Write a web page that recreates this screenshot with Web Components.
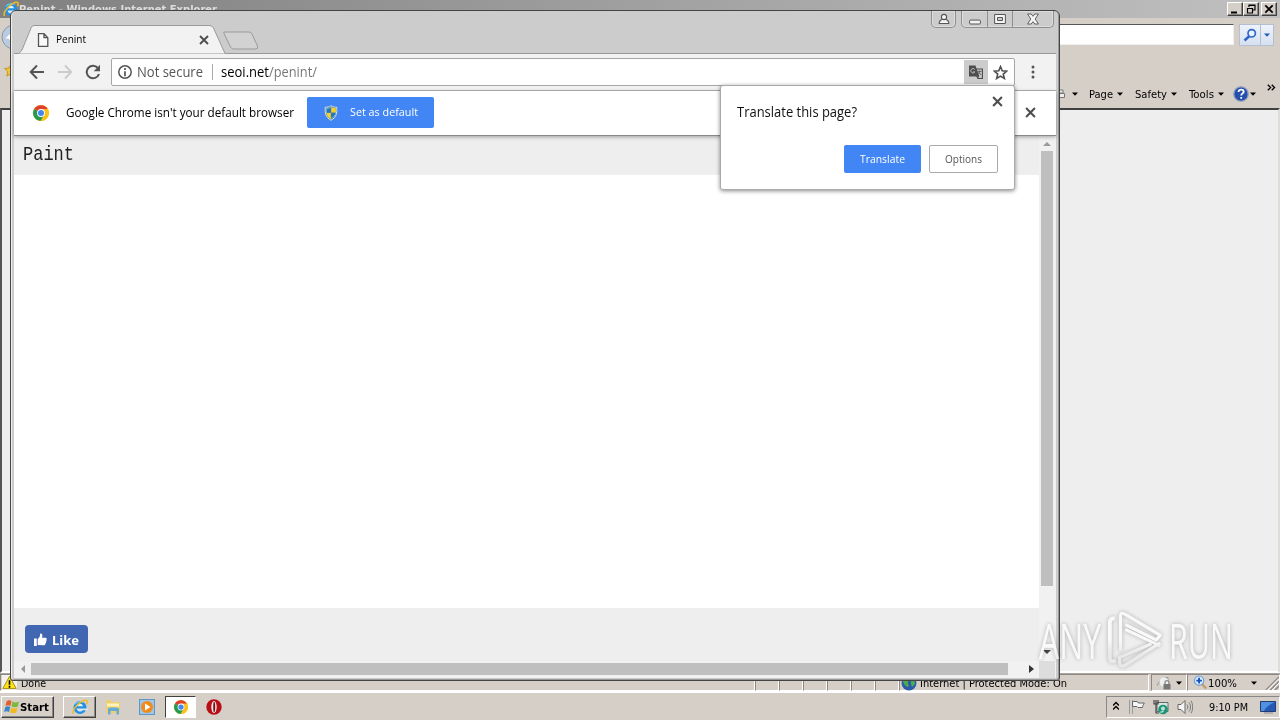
<!DOCTYPE html>
<html lang="en"><head><meta charset="utf-8"><title>Penint</title>
<style>
html,body{margin:0;width:1280px;height:720px;overflow:hidden;background:#d6cfc8}
body{font:11px "DejaVu Sans Condensed","Noto Sans",sans-serif;color:#000}
</style></head><body>
<desktop-screen></desktop-screen>
<script>
const icons={
 ie:`<svg viewBox="0 0 16 16"><circle cx="8" cy="8.500" r="6.500" fill="#2590e2"/><path d="M4.500 7.300c.5-3.300 6-3.300 6.500 0z" fill="#dff1fb"/><path d="M4.500 9.500c1 4 5 3.500 6.200 1.800h5V9.500z" fill="#d9e6ee"/><path d="M3 5.500C5 2.500 9 2 11.500 3.500" stroke="#67c4f5" stroke-width="1.300" fill="none"/><path d="M1.500 14.800C-1 11 9 1 14 1.200c2.200.5 1 3 .3 4.200" fill="none" stroke="#eebc27" stroke-width="1.500"/></svg>`,
 chrome:`<svg viewBox="0 0 16 16"><circle cx="8" cy="8" r="8" fill="#fbc116"/><path d="M8 8L1.100 4A8 8 0 0 1 14.900 4.300H8z" fill="#e03d30"/><path d="M8 8L1.100 4A8 8 0 0 0 7.600 16L11.500 9.800z" fill="#269b50"/><path d="M8 4.300H15A8 8 0 0 1 7.600 16L11.300 10z" fill="#fbc116"/><circle cx="8" cy="8" r="3.900" fill="#fff"/><circle cx="8" cy="8" r="3" fill="#4387ee"/></svg>`,
 page:`<svg viewBox="0 0 12 14"><path d="M1.500.7h5.500l3.800 4v8.600H1.500zM7 .7v4h3.800" fill="#fafafa" stroke="#555" stroke-width="1.300"/></svg>`,
 x:`<svg viewBox="0 0 10 10"><path d="M1 1l8 8M9 1L1 9" stroke="#4e4e4e" stroke-width="1.900"/></svg>`,
 back:`<svg viewBox="0 0 16 16"><path d="M15 8H2M8 1.500L1.700 8 8 14.500" fill="none" stroke="#555" stroke-width="2"/></svg>`,
 fwd:`<svg viewBox="0 0 16 16"><path d="M1 8h13M8 1.500L14.300 8 8 14.500" fill="none" stroke="#ccc" stroke-width="2"/></svg>`,
 reload:`<svg viewBox="0 0 16 16"><path d="M13.200 4.400A6.300 6.300 0 1 0 14 10" fill="none" stroke="#555" stroke-width="2"/><path d="M15 .8v6.400H8.700z" fill="#555"/></svg>`,
 info:`<svg viewBox="0 0 14 14"><circle cx="7" cy="7" r="6.200" fill="none" stroke="#555" stroke-width="1.500"/><path d="M7 3v2M7 6.200v5" stroke="#555" stroke-width="1.700"/></svg>`,
 translate:`<svg viewBox="0 0 16 15"><path d="M1 1h6.500l1 3H15v10.500H9.500L8.300 12H1z" fill="#4d4d4d"/><path d="M8.900 5h5v8.500h-3.700l1-2z" fill="#c4c4c4"/><path d="M6.700 4.900a2.200 2.200 0 1 0 .2 2.500H5" fill="none" stroke="#bbb"/><path d="M9.500 7h4M11.500 6v1.500L10 10M11 8l2 2.500" stroke="#666" fill="none"/></svg>`,
 star:`<svg viewBox="0 0 14 14"><path d="M7 1.500l1.600 3.900 4.200.3-3.200 2.800 1 4.100L7 10.400l-3.600 2.200 1-4.100L1.200 5.700l4.200-.3z" fill="none" stroke="#505050" stroke-width="1.500"/></svg>`,
 dots:`<svg viewBox="0 0 4 14"><g fill="#555"><circle cx="2" cy="2" r="1.500"/><circle cx="2" cy="7" r="1.500"/><circle cx="2" cy="12" r="1.500"/></g></svg>`,
 shield:`<svg viewBox="0 0 14 16"><path d="M7 .8c2 1.200 3.700 1.500 5.800 1.500 0 6 .2 9.500-5.800 13C1 11.800 1.200 8.300 1.200 2.300 3.300 2.300 5 2 7 .8z" fill="#2872b8" stroke="#e9e6d1"/><path d="M6.800 2v5.800H2.200c-.2-1.500-.1-3-.1-4.600C4 3.100 5.300 2.800 6.800 2zM7.200 7.800h4.700c-.3 3-1.800 4.900-4.700 6.500z" fill="#65b5e0"/><path d="M7.200 2c1.500.8 3 1.100 4.700 1.200v4.600H7.200zM2.200 7.800h4.600v6.500C4 12.700 2.500 10.800 2.200 7.800z" fill="#f5d12c"/><path d="M6.800 3v4.800H3V4.300zM7.200 7.800h4c-.3 2.500-1.600 4-4 5.300z" fill="#2872b8"/></svg>`,
 thumb:`<svg viewBox="0 0 14 14"><path d="M0 6h3v8H0zM4 13V6.500C6 5 6.600 3.500 6.600.8c2.200-.8 3 1.500 2 4.300h4c1.500.5 1.300 1.800.6 2.300.6.700.4 1.700-.3 2 .3.800 0 1.500-.6 1.800.2 1.200-.5 2-1.700 2z" fill="#fff"/></svg>`,
 user:`<svg viewBox="0 0 12 12"><path d="M4.300 6.500C2 7 1.200 8 1.200 10.500h9.600C10.800 8 10 7 7.700 6.500z" fill="#f4f4f4" stroke="#555" stroke-width="1.100"/><circle cx="6" cy="4" r="2.600" fill="#f4f4f4" stroke="#555" stroke-width="1.100"/></svg>`,
 min:`<svg viewBox="0 0 12 12"><rect x=".6" y="7.100" width="10.800" height="3.900" rx="1" fill="#f4f4f4" stroke="#555"/></svg>`,
 max:`<svg viewBox="0 0 12 12"><path d="M.6 1.500h10.800v9H.6zM3.500 4.500h5v3h-5z" fill="#f4f4f4" fill-rule="evenodd" stroke="#555"/></svg>`,
 winx:`<svg viewBox="0 0 12 12"><path d="M.6 1h3.600L6 3.300 7.800 1h3.600L8.200 6l3.200 5H7.800L6 8.700 4.200 11H.6l3.200-5z" fill="#f4f4f4" stroke="#555" stroke-width=".9"/></svg>`,
 cmin:`<svg viewBox="0 0 10 10"><path d="M1 8.500h6" stroke="#000" stroke-width="2"/></svg>`,
 cmax:`<svg viewBox="0 0 10 10"><path d="M3 3V1h6v5H7M3 1.500h6M1 4.500h6M1.500 4v5h5V4" fill="none" stroke="#000" stroke-width="1.200"/></svg>`,
 cx:`<svg viewBox="0 0 10 10"><path d="M1.300 1.300l7.400 7.400M8.700 1.300L1.300 8.700" stroke="#000" stroke-width="1.800"/></svg>`,
 search:`<svg viewBox="0 0 14 14"><path d="M6.500 8L1.500 12.500" stroke="#2b62c4" stroke-width="2.400"/><circle cx="8.700" cy="5.300" r="3.700" fill="#e6f2ff" stroke="#3166cc" stroke-width="1.700"/></svg>`,
 help:`<svg viewBox="0 0 16 16"><circle cx="8" cy="8" r="7.200" fill="#244fae" stroke="#8c9cbb" stroke-width="1.300"/><path d="M5.500 6c0-3.200 5.200-3 5.200-.2C10.700 7.500 8.200 7.300 8.200 9.500M8.200 11v1.800" fill="none" stroke="#fff" stroke-width="1.800"/></svg>`,
 flag:`<svg viewBox="0 0 16 16"><path d="M2 1v14" stroke="#666" stroke-width="3"/><path d="M2 1v14" stroke="#fff" stroke-width="1.400"/><path d="M3.500 2.500h4.800l1 1.500h6c-1 1.800-1.800 3-1.800 4.500H9L8 7.500H3.500z" fill="#f5f5f5" stroke="#666"/></svg>`,
 net:`<svg viewBox="0 0 16 16"><path d="M4 3.500h11v9H4z" fill="#dbe7e2" stroke="#5c6c6a"/><circle cx="10" cy="10.500" r="4.800" fill="#209378"/><circle cx="10" cy="9.500" r="2" fill="#b5e5d8"/><path d="M7.500 13.500l3-1.500" stroke="#a4e4cd" stroke-width="1.500" fill="none"/><path d="M1 1v4h4V1M3 1v13h3" stroke="#444" stroke-width="1.200" fill="none"/></svg>`,
 sound:`<svg viewBox="0 0 16 16"><path d="M1 5.500h3l4-4v13l-4-4H1z" fill="#f5f5f5" stroke="#666"/><path d="M10 5.500c1.200 1.500 1.200 3.500 0 5M12 3.500c2 2.600 2 6.400 0 9M14 1.800c2.200 3.500 2.200 9 0 12.400" fill="none" stroke="#777"/></svg>`,
 desk:`<svg viewBox="0 0 16 16"><path d="M.5 2.500h15v10H.5z" fill="#2459b5" stroke="#233c70"/><path d="M1 3h14C10 5 6 8 4 12H1z" fill="#4f90e0"/><path d="M4 14h9" stroke="#889"/></svg>`,
 folder:`<svg viewBox="0 0 16 16"><path d="M1 1h5l1 2h8v11H1z" fill="#edcf71"/><path d="M2 4.500h12v3H2z" fill="#fff3bc"/><path d="M3 15.500V9.500c0-1.500 11-1.500 11 0v6h-2.500V12h-6v3.500z" fill="#64acd7"/></svg>`,
 media:`<svg viewBox="0 0 16 16"><rect x=".5" y=".5" width="15" height="15" fill="#9fc7e5" stroke="#5c98c9"/><circle cx="8" cy="8" r="6" fill="#f28a1b"/><path d="M6 4.500v7L11.500 8z" fill="#fff"/></svg>`,
 opera:`<svg viewBox="0 0 16 16"><circle cx="8" cy="8" r="7.700" fill="#b70f15"/><ellipse cx="8" cy="8" rx="2.700" ry="6" fill="#eee"/><ellipse cx="8.200" cy="8" rx="1" ry="5.300" fill="#850c12"/></svg>`,
 start:`<svg viewBox="0 0 16 16"><path d="M2.500 2.500C4 1 6 1 7.500 2L6.500 7C5 6 3 6 1.500 7z" fill="#e25f2b"/><path d="M8.500 2.500c2 1.200 4 1.200 6.500 0l-1.200 5c-2 1-4 1-6.300 0z" fill="#7bb83c"/><path d="M1.300 8c1.700-1 3.500-.8 5 0L5 13c-1.500-1-3.500-1-5 0z" fill="#3a86cc"/><path d="M7.300 8.500c2 1.200 4 1.200 6.200 0l-1.300 5c-2 1-4 1-6.200 0z" fill="#f2b921"/></svg>`,
 warn:`<svg viewBox="0 0 16 16"><rect width="16" height="16" fill="#f4f2ef"/><path d="M8 1.500L15.200 14.500H.8z" fill="#ffe216" stroke="#9c8a10"/><path d="M8 5.500v5M8 11.500v2" stroke="#000" stroke-width="1.700"/></svg>`,
 globe:`<svg viewBox="0 0 16 16"><circle cx="8" cy="8" r="7.500" fill="#2c5ca9"/><path d="M4 2c4 0 4 3 3 5s2 3 0 5c-2 0-5-4-5-6zM10 4c3 0 4 3 4 5l-3 3-1-3z" fill="#4bae4d"/></svg>`,
 lock:`<svg viewBox="0 0 16 16"><path d="M1 10.500c2-5 6-8 11-8v5" fill="#c4c4c4" stroke="#999"/><circle cx="8" cy="7" r="4.500" fill="#eee"/><path d="M9 9.500V7.700a2 2 0 0 1 4 0v1.800" fill="none" stroke="#888" stroke-width="1.300"/><rect x="7.500" y="9" width="7" height="5.500" fill="#777"/></svg>`,
 zoom:`<svg viewBox="0 0 16 16"><path d="M9.500 9.500l4.500 5" stroke="#c99a62" stroke-width="2.400"/><circle cx="6.500" cy="6" r="5" fill="#dceeff" stroke="#6d9dd6" stroke-width="1.200"/><path d="M6.500 3v6M3.500 6h6" stroke="#1a4fb5" stroke-width="2"/></svg>`,
 nav:`<svg viewBox="0 0 26 26"><circle cx="13" cy="13" r="12" fill="#b9cbdf" stroke="#8d98a6"/><path d="M19 13H8l5-5M8 13l5 5" fill="none" stroke="#fff" stroke-width="3"/></svg>`,
 fav:`<svg viewBox="0 0 14 14"><path d="M7 1l2 4 4.500.5-3.300 3 1 4.500L7 10.800 2.800 13l1-4.500L.5 5.500 5 5z" fill="#f4c63a" stroke="#c49521"/></svg>`,
 printer:`<svg viewBox="0 0 10 10"><path d="M2 1h6v3H2zM.5 4.500h9v4h-9z" fill="#eee" stroke="#777"/></svg>`,
 chev:`<svg viewBox="0 0 8 8"><path d="M.7 1.500L3.200 4 .7 6.500M4.200 1.500L6.700 4 4.200 6.500" fill="none" stroke="#000" stroke-width="1.200"/></svg>`,
 dn:`<svg viewBox="0 0 6 4"><path d="M0 .5h6L3 3.700z" fill="currentColor"/></svg>`,
 sz:`<svg viewBox="0 0 14 14"><path d="M1 14L14 1M5.500 14L14 5.500M10 14l4-4" stroke="#8c8780" stroke-width="1.500"/><path d="M2.500 14L14 2.500M7 14l7-7" stroke="#fff"/></svg>`,
 play:`<svg viewBox="0 0 60 62"><defs><linearGradient id="g" x2="0" y2="1"><stop offset=".5" stop-color="#fff"/><stop offset=".75" stop-color="#e8e8e8"/></linearGradient></defs><g fill="none" stroke="url(#g)" stroke-linejoin="round"><path d="M9 9Q4 8 4 13V50Q5 55 10 52" stroke-width="4"/><path d="M15 42V6Q15 2 19 4L56 26 52 31 20 15M20 20L56 37M56 34L20 57Q15 60 14 54V49L47 35" stroke-width="3.200"/></g></svg>`
};
function make(name,css,html){
 customElements.define(name,class extends HTMLElement{
  constructor(){super();this.attachShadow({mode:'open'}).innerHTML=`<style>*{box-sizing:border-box}:host{box-sizing:border-box}${css}</style>${html}`}
 });
}
/* Full-screen stack: browser in the back, browser window over it, taskbar below */
make('desktop-screen',':host{display:grid;grid-template-rows:692px 28px;width:1280px;height:720px;position:relative;overflow:hidden}chrome-window{position:absolute;left:10px;top:10px}any-mark{position:absolute;left:1039px;top:608px}',
`<ie-window></ie-window><task-bar></task-bar><chrome-window></chrome-window><any-mark></any-mark>`);

make('ie-window',`:host{display:grid;grid-template-rows:18px 34px 56px 565px 19px;height:692px;background:#d6cfc8}
.title{display:flex;align-items:center;padding:0 3px;background:linear-gradient(90deg,#808080,#c0c0c0);color:#ddd;font-weight:bold}
.title fit-text{margin-left:0}.sp{flex:1}
.cb{width:16px;height:14px;display:grid;place-items:center;background:#d6cfc8;border:1px solid;border-color:#fff #404040 #404040 #fff;box-shadow:inset -1px -1px #888}.cb.l{margin-left:2px}
.nav{display:flex;padding:6px 6px 0 1px}.addr{flex:1;height:21px;margin-right:5px;background:#fff;border:1px solid #555;border-right-color:#eee;border-bottom-color:#eee}
.srch{display:flex;height:22px;border:1px solid #b5bfd0;background:linear-gradient(#eef3fb,#d5e0f1)}.srch div{display:grid;place-items:center;width:20px}.srch div+div{width:13px;border-left:1px solid #b5bfd0;color:#235bb5}
.cmd{display:flex;align-items:center;padding:28px 4px 0 4px}.cmd ui-icon{flex:none}
.body{background:#eee;border:solid;border-width:2px 2px 2px 2px;border-color:#404040 #e0ddd9 #fff #555;}
.status{display:flex;background:#d6cfc8;border-bottom:1px solid #fff;align-items:center;border-top:1px solid #aaa5a0}
.pane{height:17px;flex:none;border:1px solid;border-color:#8d8781 #fff #fff #8d8781;display:flex;align-items:center}.pane fit-text{padding-top:2px}`,
`<div class="title"><ui-icon n="ie" s="16"></ui-icon><fit-text w="198">Penint - Windows Internet Explorer</fit-text><span class="sp"></span><div class="cb"><ui-icon n="cmin" s="10"></ui-icon></div><div class="cb"><ui-icon n="cmax" s="10"></ui-icon></div><div class="cb l"><ui-icon n="cx" s="10"></ui-icon></div></div>
<div class="nav"><ui-icon n="nav" s="26"></ui-icon><div class="addr"></div><div class="srch"><div><ui-icon n="search" s="14"></ui-icon></div><div><ui-icon n="dn" s="6"></ui-icon></div></div></div>
<div class="cmd"><ui-icon n="fav" s="14" style="margin-top:-48px"></ui-icon><span class="sp"></span><ui-icon n="printer" s="10"></ui-icon><ui-icon n="dn" s="6" style="margin:0 11px 0 7px"></ui-icon><fit-text w="24">Page</fit-text><ui-icon n="dn" s="6" style="margin:0 12px 0 4px"></ui-icon><fit-text w="32">Safety</fit-text><ui-icon n="dn" s="6" style="margin:0 12px 0 4px"></ui-icon><fit-text w="25">Tools</fit-text><ui-icon n="dn" s="6" style="margin:0 9px 0 4px"></ui-icon><ui-icon n="help" s="16"></ui-icon><ui-icon n="dn" s="6" style="margin:0 11px 0 1px"></ui-icon><ui-icon n="chev" s="9" style="margin-top:-13px"></ui-icon></div>
<div class="body"></div>
<div class="status"><div class="pane" style="width:755px;padding-left:1px"><ui-icon n="warn" s="15"></ui-icon><fit-text w="25" style="margin-left:4px">Done</fit-text></div>
${'<div class="pane" style="width:24px"></div>'.repeat(6)}
<div class="pane" style="width:250px;padding-left:1px"><ui-icon n="globe" s="16"></ui-icon><fit-text w="147" style="margin-left:3px">Internet | Protected Mode: On</fit-text></div>
<div class="pane" style="width:36px;margin-left:2px;padding-left:4px"><ui-icon n="lock" s="16"></ui-icon><ui-icon n="dn" s="6" style="margin-left:4px"></ui-icon></div>
<div class="pane" style="width:93px;padding-left:5px"><ui-icon n="zoom" s="15"></ui-icon><fit-text w="29">100%</fit-text><ui-icon n="dn" s="6" style="margin:0 8px 0 14px"></ui-icon><ui-icon n="sz" s="14"></ui-icon></div></div>`);

make('task-bar',`:host{display:flex;align-items:center;height:28px;padding:1px 0 0 1px;background:#d6cfc8;border-top:1px solid #fff}
.b{height:22px;display:flex;align-items:center;justify-content:center}
.r{border:1px solid;border-color:#fff #404040 #404040 #fff;box-shadow:inset -1px -1px #888}
.p{border:1px solid;border-color:#404040 #fff #fff #404040;background:#fff}
.tray{margin-left:auto;width:174px;height:22px;border:1px solid;border-color:#888 #fff #fff #888;display:flex;align-items:center;padding-left:8px}.up{width:6px;height:10px;margin:0 10px 3px -2px}`,
`<div class="b r" style="width:53px"><ui-icon n="start" s="16"></ui-icon><fit-text w="29" style="font-weight:bold;margin:0 2px 0 0">Start</fit-text></div>
<div class="b r" style="width:33px;margin-left:9px"><ui-icon n="ie" s="16"></ui-icon></div>
<ui-icon n="folder" s="16" style="margin-left:9px"></ui-icon><ui-icon n="media" s="16" style="margin-left:18px"></ui-icon>
<div class="b p" style="width:31px;margin-left:10px"><ui-icon n="chrome" s="14"></ui-icon></div><ui-icon n="opera" s="16" style="margin-left:10px"></ui-icon>
<div class="tray"><svg class="up" viewBox="0 0 6 10"><path d="M0 4.500L3 1.500l3 3M0 8.500l3-3 3 3" fill="none" stroke="#000" stroke-width="1.400"/></svg><ui-icon n="flag" s="16"></ui-icon><ui-icon n="net" s="16" style="margin-left:8px"></ui-icon><ui-icon n="sound" s="16" style="margin-left:8px"></ui-icon><fit-text w="39" style="margin:0 12px 0 16px">9:10 PM</fit-text><ui-icon n="desk" s="16"></ui-icon></div>`);

make('chrome-window',`:host{display:grid;grid-template-rows:43px 37px 45px 543px;width:1050px;height:671px;padding:0 5px 3px 3px;background:#ccc;border:1px solid #444;border-radius:6px 6px 3px 3px;box-shadow:inset 1px 0 #eee,inset -1px -1px #999;font-family:"Open Sans","Noto Sans",sans-serif}
translate-bubble{position:absolute;left:709px;top:74px;z-index:2}`,
`<tab-strip></tab-strip><tool-bar></tool-bar><info-bar></info-bar><web-view></web-view><translate-bubble></translate-bubble>`);

make('tab-strip',`:host{display:block;height:43px;position:relative;width:1042px}
.tabs{display:block;width:1042px;height:43px}.tab{position:absolute;left:22px;top:19px;width:173px;height:20px;display:flex;align-items:center;color:#000}
.win{position:absolute;right:2px;top:0;display:flex;gap:5px}.g{display:flex;height:17px;border:1px solid #8f8f8f;border-top:0;border-radius:0 0 5px 5px;box-shadow:inset 0 0 0 1px #ddd}.g div{display:grid;place-items:center}.g div+div{border-left:1px solid #8f8f8f}`,
`<svg class="tabs" viewBox="0 0 1042 43" preserveAspectRatio="none"><path d="M0 42.500H5L8 39 17 17Q18 14.500 20 14.500H196Q198 14.500 199.500 17L211 42.500H1042V43H0z" fill="#f2f2f2" stroke="#999"/><path d="M210 22.500q-1-1.500 1-1.500h24q2 0 3 2l5.500 12q1 3-2 3h-22q-2 0-3-2z" fill="#d2d2d2" stroke="#999"/></svg>
<div class="tab"><ui-icon n="page" s="14"></ui-icon><fit-text w="30" style="font-size:11.500px;margin:-3px auto 0 6px">Penint</fit-text><ui-icon n="x" s="10"></ui-icon></div>
<div class="win"><div class="g"><div style="width:23px"><ui-icon n="user" s="12"></ui-icon></div></div><div class="g"><div style="width:25px"><ui-icon n="min" s="12"></ui-icon></div><div style="width:25px"><ui-icon n="max" s="12"></ui-icon></div><div style="width:41px"><ui-icon n="winx" s="12"></ui-icon></div></div></div>`);

make('tool-bar',`:host{display:flex;align-items:center;height:37px;background:#f2f2f2;border-bottom:1px solid #b5b5b5;padding:0 16px 0 15px}
.box{flex:1;height:28px;margin:0 11px 0 10px;border:1px solid #a6a6a6;border-radius:2px;background:#fff;display:flex;align-items:center;padding-left:6px;font-size:14px;color:#555}.box fit-text{margin-top:-2px}
.sep{width:1px;height:16px;background:#aaa;margin:0 8px 0 9px}.t{width:24px;height:24px;background:#ccc;display:grid;place-items:center;margin-left:auto}`,
`<ui-icon n="back" s="16"></ui-icon><ui-icon n="fwd" s="16" style="margin-left:12px"></ui-icon><ui-icon n="reload" s="16" style="margin-left:12px"></ui-icon>
<div class="box"><ui-icon n="info" s="14"></ui-icon><fit-text w="66" style="margin-left:5px">Not secure</fit-text><span class="sep"></span><fit-text w="48" style="color:#000">seoi.net</fit-text><fit-text w="48" style="color:#777">/penint/</fit-text><div class="t"><ui-icon n="translate" s="16"></ui-icon></div><ui-icon n="star" s="15" style="margin:0 6px 0 5px"></ui-icon></div><ui-icon n="dots" s="14"></ui-icon>`);

make('info-bar',`:host{display:flex;align-items:center;height:45px;background:#fff;border-bottom:1px solid #888;padding:0 20px 1px 19px;z-index:1;box-shadow:0 1px 4px #0005}
.btn{display:flex;align-items:center;width:127px;height:31px;background:#4285f4;border-radius:2px;color:#fff;padding-left:16px;font-size:11.500px;margin-left:13px}fit-text{margin-top:-2px}`,
`<ui-icon n="chrome" s="16"></ui-icon><fit-text w="228" style="font-size:13px;margin-left:17px">Google Chrome isn't your default browser</fit-text><div class="btn"><ui-icon n="shield" s="16"></ui-icon><fit-text w="68" style="margin-left:11px">Set as default</fit-text></div><ui-icon n="x" s="11" style="margin-left:auto"></ui-icon>`);

make('web-view',`:host{display:grid;grid-template-columns:1025px 16px;grid-template-rows:525px 17px;height:542px;background:#f1f1f1;min-height:0}
.doc{display:grid;grid-template-rows:39px 433px 53px}.h,.f{background:#eee}.m{background:#fff}
.h{padding:6px 0 0 9px;font:20px/26px "Liberation Mono",monospace;color:#222}.f{padding:17px 0 0 11px}
.like{width:63px;height:28px;border-radius:4px;background:#4267b2;color:#fff;display:flex;align-items:center;padding-left:9px;font:bold 13px "Noto Sans",sans-serif}
.v{display:flex;flex-direction:column;align-items:center;padding-top:5px}.v i{width:12px;height:435px;margin-top:5px;background:#bfbfbf}
.hz{display:flex;align-items:center;padding:0 0 1px 6px}.hz i{width:977px;height:12px;margin-left:6px;background:#bfbfbf}.c{background:#ddd}`,
`<div class="doc"><div class="h"><fit-text w="51">Paint</fit-text></div><div class="m"></div><div class="f"><div class="like"><ui-icon n="thumb" s="13"></ui-icon><fit-text w="27" style="margin:1px 0 0 5px">Like</fit-text></div></div></div>
<div class="v"><svg width="8" height="5"><path d="M0 5l4-4 4 4" fill="#999"/></svg><i></i><svg width="8" height="5" style="margin-top:64px"><path d="M0 0h8L4 4z" fill="#444"/></svg></div>
<div class="hz"><svg width="5" height="8"><path d="M5 0v8L1 4" fill="#999"/></svg><i></i><svg width="5" height="8" style="margin-left:21px"><path d="M0 0v8l5-4" fill="#333"/></svg></div><div class="c"></div>`);

make('translate-bubble',`:host{display:flex;flex-direction:column;width:295px;height:105px;background:#fff;border:1px solid #aaa;border-radius:3px;box-shadow:0 1px 4px #0007;padding:10px 11px 16px 16px}
.top{display:flex;justify-content:space-between;height:32px;font-size:14px;color:#111}.bot{display:flex;justify-content:flex-end;gap:8px;margin-top:auto;padding-right:5px;font-size:11.500px}.bot fit-text{margin-top:-2px}
.bot div{height:28px;display:grid;place-items:center;border-radius:2px;width:69px;border:1px solid #aaa;color:#555}.bot .p{width:77px;background:#4285f4;color:#fff;border:0}`,
`<div class="top"><fit-text w="120" style="margin-top:6px">Translate this page?</fit-text><ui-icon n="x" s="11"></ui-icon></div><div class="bot"><div class="p"><fit-text w="45">Translate</fit-text></div><div><fit-text w="37">Options</fit-text></div></div>`);

make('any-mark',`:host{display:flex;align-items:center;width:196px;height:64px;opacity:.68;color:#fff;font:49px/64px "Open Sans",sans-serif;filter:drop-shadow(0 0 2px #0006)}ui-icon{margin:0 4px}`,
`<fit-text w="62">ANY</fit-text><ui-icon n="play" s="60"></ui-icon><fit-text w="64">RUN</fit-text>`);

customElements.define('ui-icon',class extends HTMLElement{
 connectedCallback(){if(this.shadowRoot)return;const s=this.getAttribute('s');
  this.attachShadow({mode:'open'}).innerHTML=`<style>:host{display:block;flex:none;width:${s}px;line-height:0}:host svg{display:block;width:${s}px;height:${this.getAttribute('n')==='dn'?4:s}px}svg{display:block;width:${s}px;height:${this.getAttribute('n')==='dn'?4:s}px}</style>${icons[this.getAttribute('n')]}`}
});
/* One-line label condensed or expanded to the width given in w */
customElements.define('fit-text',class extends HTMLElement{
 connectedCallback(){if(this.shadowRoot)return;const w=+this.getAttribute('w');
  this.attachShadow({mode:'open'}).innerHTML=`<style>:host{display:block;flex:none;width:${w}px;white-space:nowrap}span{display:inline-block;transform-origin:0 50%}</style><span><slot></slot></span>`;
  const e=this.shadowRoot.querySelector('span');e.style.transform=`scaleX(${w/e.getBoundingClientRect().width})`}
});
</script></body></html>
